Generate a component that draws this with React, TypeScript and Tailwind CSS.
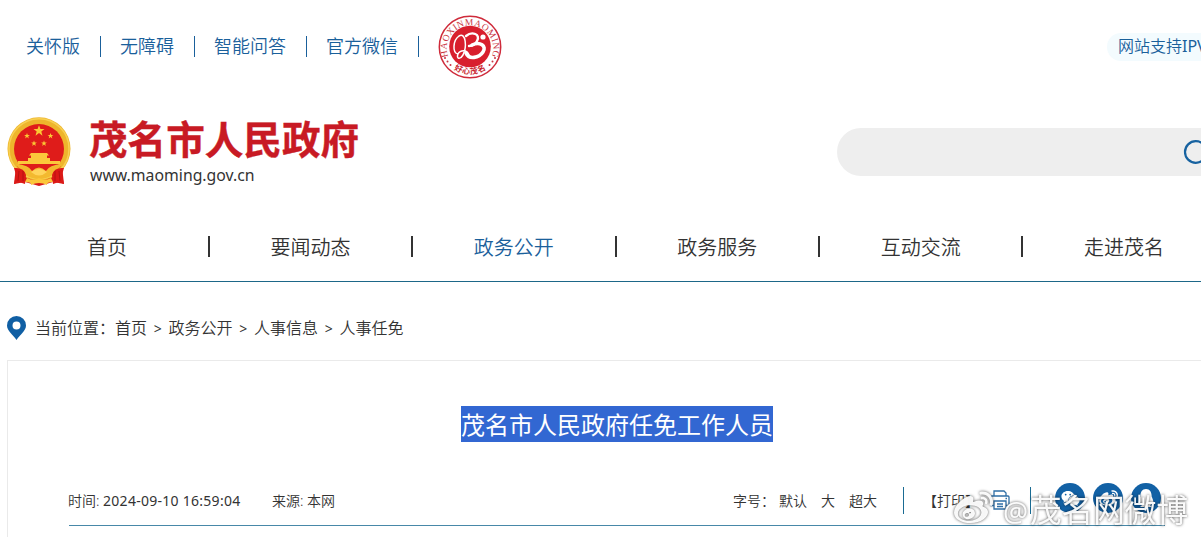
import { FaWeibo, FaWeixin, FaQq } from 'react-icons/fa'

const topLinks = ['关怀版', '无障碍', '智能问答', '官方微信']

const navItems = ['首页', '要闻动态', '政务公开', '政务服务', '互动交流', '走进茂名']

const crumbs = ['首页', '政务公开', '人事信息', '人事任免']

function Seal() {
  return (
    <svg viewBox="0 0 64 64" className="ml-5 h-16 w-16 shrink-0">
      <defs>
        <path id="sealTop" d="M10.8 43A23.2 23.2 0 1 1 53.2 43" />
        <path id="sealBottom" d="M12 51A28.5 28.5 0 0 0 52 51" />
      </defs>
      <circle cx="32" cy="32" r="30.7" fill="#fff" stroke="#cf2b3b" strokeWidth="1.5" />
      <circle cx="32" cy="31.5" r="20.8" fill="#d81f2d" />
      <text fill="#c93543" fontSize="9.4" fontFamily="Liberation Serif, serif">
        <textPath href="#sealTop" startOffset="50%" textAnchor="middle" textLength="89" lengthAdjust="spacing">
          HAOXINMAOMING
        </textPath>
      </text>
      <text fill="#c91f30" fontSize="8" fontWeight="700" fontFamily="Noto Sans CJK SC, sans-serif">
        <textPath href="#sealBottom" startOffset="50%" textAnchor="middle" textLength="34" lengthAdjust="spacing">
          好心茂名
        </textPath>
      </text>
      <g fill="#c93543">
        <circle cx="7" cy="43" r="1" />
        <circle cx="9.5" cy="46.5" r="1" />
        <circle cx="12.5" cy="50" r="1" />
        <circle cx="57" cy="43" r="1" />
        <circle cx="54.5" cy="46.5" r="1" />
        <circle cx="51.5" cy="50" r="1" />
      </g>
      <g fill="none" stroke="#fff" strokeLinecap="round">
        <path d="M20 39C14 38 15 25 21 21C28 17 29 32 25 40C22 45 18 44 20 39C22 35 29 34 31 40" strokeWidth="1.5" />
        <path d="M28 21C34 16 43 19 39 26C37 30 33 31 31 31" strokeWidth="2.4" />
        <path d="M34 30C42 26 49 31 45 37C41 43 31 45 28 38" strokeWidth="3.6" />
      </g>
      <circle cx="45" cy="22" r="2.6" fill="#fff" />
    </svg>
  )
}

function Star({ x, y, s }: { x: number; y: number; s: number }) {
  return (
    <path
      transform={`translate(${x} ${y}) scale(${s})`}
      fill="#fbc934"
      d="M0-10L2.5-3.3H9.5L4 1 6 8 0 3.5-6 8-4 1-9.5-3.3H-2.5Z"
    />
  )
}

function Emblem() {
  return (
    <svg viewBox="0 0 64 70" className="h-[70px] w-16 shrink-0">
      <path d="M9 49L7 67 18 65 32 69 46 65 57 67 55 49Z" fill="#d81a18" />
      <circle cx="32" cy="31.8" r="31.5" fill="#eeb52c" />
      <circle cx="32" cy="31.8" r="30" fill="none" stroke="#f8d052" strokeWidth="1.5" />
      <circle cx="32" cy="32" r="25" fill="#df1c1a" />
      <Star x={32} y={14} s={0.58} />
      <Star x={20} y={19} s={0.3} />
      <Star x={43.5} y={19} s={0.3} />
      <Star x={27} y={26.5} s={0.3} />
      <Star x={37} y={26.5} s={0.3} />
      <path d="M24 36H40L42 38.5H40V41H43V44H53V47H11V44H21V41H24V38.5H22Z" fill="#fbc83b" />
      <path d="M10 49.5H54L49 54H15Z" fill="#df1c1a" />
      <path d="M9 47Q22 48 25 54Q32 47 39 54Q42 48 55 47Q46 62 32 62Q18 62 9 47Z" fill="#f3b92f" />
      <path d="M24 55Q32 49 40 55Q32 62 24 55Z" fill="#ffd45c" />
      <path d="M7 51Q17 50 19 58L18 67 12 65 7 67 9 58Z" fill="#dc1917" />
      <path d="M57 51Q47 50 45 58L46 67 52 65 57 67 55 58Z" fill="#dc1917" />
      <path d="M20 61Q26 64 32 61Q38 64 44 61L46 65Q39 65 40 68Q32 64 24 68Q25 65 18 65Z" fill="#fbc73a" />
      <path d="M12 54L11 64M16 54V64M52 54L53 64M48 54V64" stroke="#ad1010" strokeWidth=".8" />
    </svg>
  )
}

function Printer() {
  return (
    <svg viewBox="0 0 20 20" className="ml-[11px] h-5 w-5" fill="none" stroke="#2f6fa6" strokeWidth="1.3">
      <path d="M4 6V1H14L16 3V6" />
      <path d="M4 15.5H1V7Q1 6 2 6H18Q19 6 19 7V15.5H16" />
      <path d="M4 11H16V19H4Z" />
      <path d="M7 14H13M7 16.5H13M15.5 8.5H17" />
    </svg>
  )
}

export default function App() {
  return (
    <div className="relative h-[537px] w-[1201px] overflow-hidden bg-white font-['Noto_Sans','Noto_Sans_CJK_SC',sans-serif] font-[350] text-[#333]">
      <div className="flex h-[93px] items-center justify-between pl-[26px]">
        <div className="flex items-center text-lg text-[#1a609b]">
          {topLinks.map((link) => (
            <div key={link} className="flex items-center">
              <a className="pb-px leading-6">{link}</a>
              <span className="mr-[19px] ml-5 h-[21px] w-px bg-[#1a609b]" />
            </div>
          ))}
          <div className="-ml-5">
            <Seal />
          </div>
        </div>
        <div className="w-[94px] overflow-hidden rounded-l-full bg-[#f3fbfe] pt-px pb-[3px] pl-[11px] text-base whitespace-nowrap text-[#1a609b]">
          网站支持<span className="font-normal">IPV6</span>
        </div>
      </div>

      <header className="flex h-[120px] pl-[7px]">
        <div className="pt-6">
          <Emblem />
        </div>
        <div className="ml-[18px] pt-6">
          <h1 className="text-[38.6px] leading-[44px] font-bold whitespace-nowrap text-[#c81a24] [-webkit-text-stroke:0.4px_#c81a24]">
            茂名市人民政府
          </h1>
          <p className="pl-px text-[15.8px] leading-7 font-normal">www.maoming.gov.cn</p>
        </div>
        <div className="mt-[35px] ml-auto flex h-12 w-[364px] shrink-0 items-center justify-end overflow-hidden rounded-l-full bg-[#eee]">
          <svg viewBox="0 0 18 24" className="h-6 w-[18px]" fill="none" stroke="#1762a0" strokeWidth="2.2">
            <circle cx="12.8" cy="12" r="10.8" />
          </svg>
        </div>
      </header>

      <nav className="flex h-[69px] border-b border-[#1d6788] pl-[6.4px] text-xl">
        {navItems.map((item) => (
          <div key={item} className="flex h-[67px] w-[203.4px] shrink-0 items-center">
            <a className={item === '政务公开' ? 'flex-1 pt-0.5 text-center text-[#1a609b]' : 'flex-1 pt-0.5 text-center'}>
              {item}
            </a>
            <span className="h-[21px] w-0.5 bg-[#333]" />
          </div>
        ))}
      </nav>

      <div className="flex h-[78px] items-center pt-[14px] pl-[7px] text-base">
        <svg viewBox="0 0 19 24" className="mr-[9px] h-6 w-[19px]">
          <path
            fillRule="evenodd"
            d="M9.5 0A9.5 9.5 0 0 0 0 9.5C0 15 6 18.5 9.5 24C13 18.5 19 15 19 9.5A9.5 9.5 0 0 0 9.5 0ZM9.5 5.5A4 4 0 1 1 9.5 13.5A4 4 0 0 1 9.5 5.5Z"
            fill="#105fa4"
          />
        </svg>
        <span>当前位置：</span>
        {crumbs.map((crumb, i) => (
          <span key={crumb} className="flex items-center">
            {i > 0 && <span className="w-[21.5px] pt-px text-center text-sm font-normal">&gt;</span>}
            <a>{crumb}</a>
          </span>
        ))}
      </div>

      <main className="ml-[7px] h-[190px] border-t border-l border-[#eaeaea]">
        <div className="flex pt-[45px] pl-[453px]">
          <h2 className="h-9 bg-[#3267d2] text-2xl leading-[37px] font-normal whitespace-nowrap text-white">
            茂名市人民政府任免工作人员
          </h2>
        </div>
        <div className="mt-[33px] ml-[61px] flex h-[51px] w-[1096px] items-center border-b border-[#4788a8] text-sm whitespace-nowrap">
          <span className="-ml-px w-[204px] pt-0.5">
            时间: <span className="font-normal tracking-[0.27px]">2024-09-10 16:59:04</span>
          </span>
          <span className="pt-0.5">来源: 本网</span>
          <div className="ml-auto flex items-center">
            <span className="w-[46px] pt-0.5">字号：</span>
            <a className="mr-[14px] pt-0.5">默认</a>
            <a className="mr-[14px] pt-0.5">大</a>
            <a className="pt-0.5">超大</a>
            <span className="mr-[19px] ml-[26px] h-[27px] w-px bg-[#1a6b93]" />
            <a className="pt-0.5">【打印】</a>
            <Printer />
            <span className="mr-6 ml-[20px] h-[27px] w-px bg-[#1a6b93]" />
            <div className="mr-1 flex gap-2 pb-1 text-white">
              <span className="flex h-[30px] w-[30px] items-center justify-center rounded-full bg-[#1261a5]">
                <FaWeixin size={19} />
              </span>
              <span className="flex h-[30px] w-[30px] items-center justify-center rounded-full bg-[#1261a5]">
                <FaWeibo size={19} />
              </span>
              <span className="flex h-[30px] w-[30px] items-center justify-center rounded-full bg-[#1261a5]">
                <FaQq size={18} />
              </span>
            </div>
          </div>
        </div>
      </main>

      {/* watermark */}
      <div className="absolute top-[486px] left-[954px] flex items-center text-white/95 drop-shadow-[0_0_1.5px_rgba(0,0,0,0.7)]">
        <FaWeibo size={39} />
        <span className="ml-[10px] pt-1 text-[31.6px] leading-10 font-normal whitespace-nowrap">
          <span className="inline-block w-[27px] text-[28px]">@</span>茂名网微博
        </span>
      </div>
    </div>
  )
}
